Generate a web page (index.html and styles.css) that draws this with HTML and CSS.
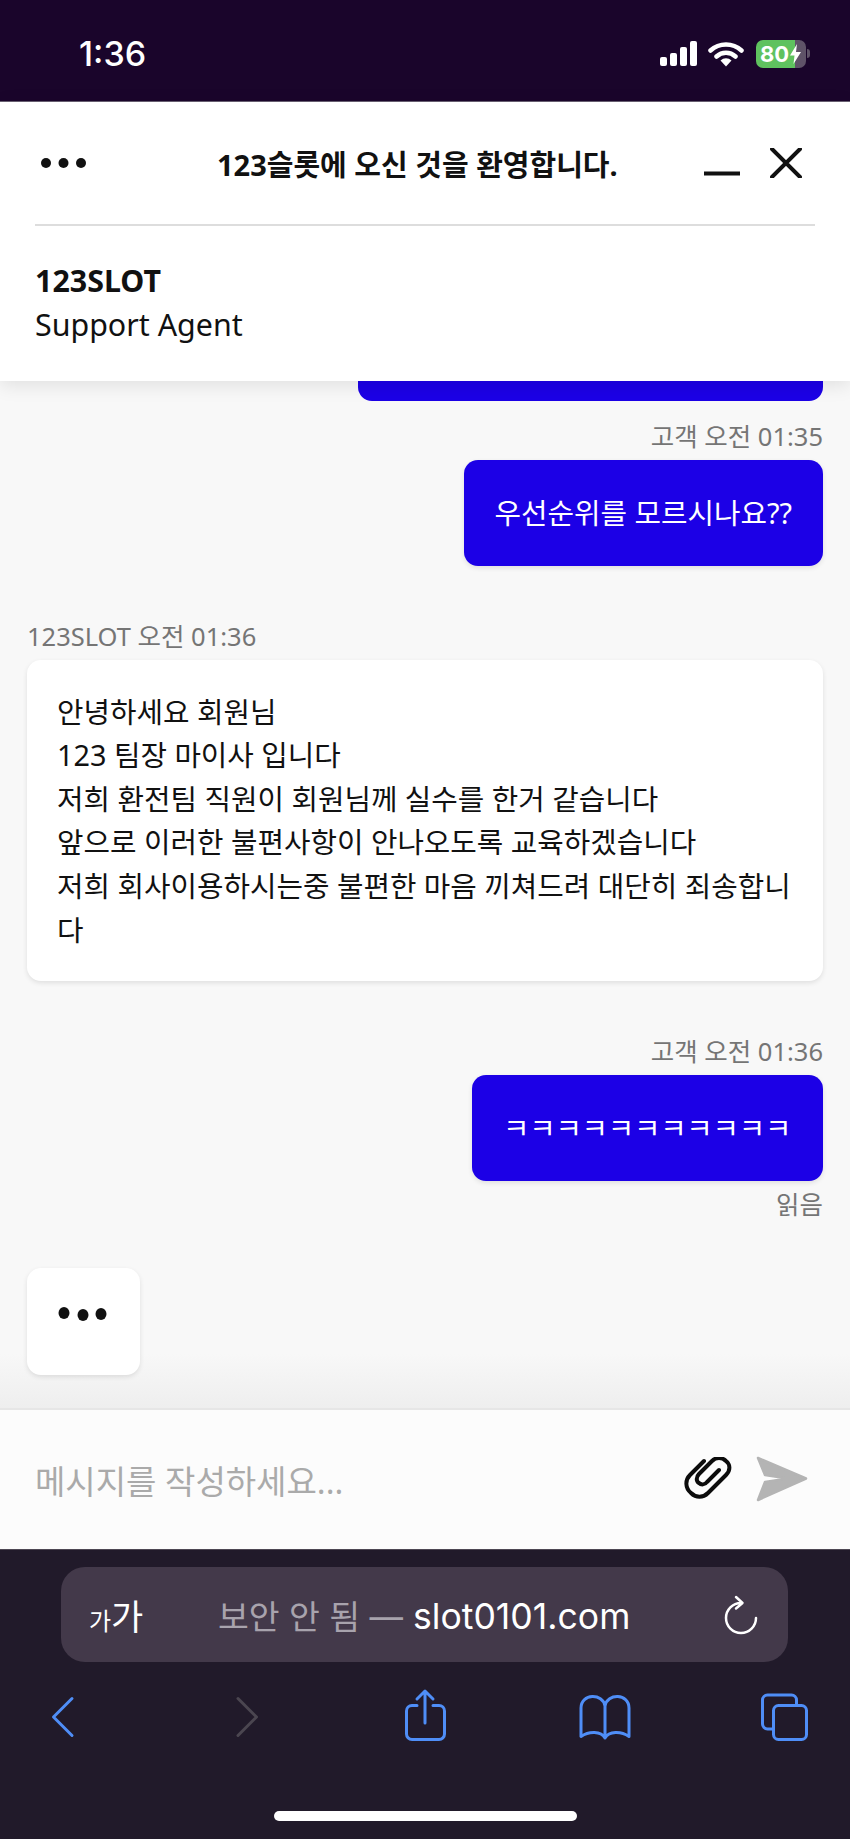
FILE: index.html
```html
<!DOCTYPE html>
<html lang="ko">
<head>
  <meta charset="UTF-8">
  <meta name="viewport" content="width=device-width, initial-scale=1.0">
  <title>123SLOT</title>
  <link rel="stylesheet" href="styles.css">
</head>
<body>
  <div class="status-bar">
    <span class="clock">1:36</span>
    <div class="status-icons">
      <div class="signal">
        <span class="bar bar-1"></span>
        <span class="bar bar-2"></span>
        <span class="bar bar-3"></span>
        <span class="bar bar-4"></span>
      </div>
      <svg class="wifi" width="36" height="27" viewBox="0 0 36 27">
        <path d="M2.5 10.5A23 23 0 0 1 33.5 10.5M8.5 16.5A14 14 0 0 1 27.5 16.5" fill="none" stroke="#fff" stroke-width="4.5" stroke-linecap="round"/>
        <path d="M12.5 20.5A8 8 0 0 1 23.500 20.500L18 26.500Z" fill="#fff"/>
      </svg>
      <div class="battery">
        <div class="battery-body">
          <span>80</span>
          <svg width="11" height="20" viewBox="0 0 11 20"><path d="M7 0L0 11.500H4.500L3.500 20L11 8H6Z" fill="#fff"/></svg>
        </div>
        <span class="battery-nub"></span>
      </div>
    </div>
  </div>

  <header class="chat-header">
    <div class="header-top">
      <svg class="header-dots" width="45" height="10" viewBox="0 0 45 10">
        <circle cx="5" cy="5" r="5"/><circle cx="22.500" cy="5" r="5"/><circle cx="40" cy="5" r="5"/>
      </svg>
      <h1 class="header-title">123슬롯에 오신 것을 환영합니다.</h1>
      <div class="window-controls">
        <svg width="36" height="30" viewBox="0 0 36 30"><path d="M0 25.500H36" stroke="#111" stroke-width="4"/></svg>
        <svg width="32" height="30" viewBox="0 0 32 30"><path d="M2 1L30 29M30 1L2 29" stroke="#111" stroke-width="4" stroke-linecap="round"/></svg>
      </div>
    </div>
    <div class="agent">
      <div class="agent-name">123SLOT</div>
      <div class="agent-role">Support Agent</div>
    </div>
  </header>

  <main class="chat">
    <div class="bubble-cut"></div>

    <div class="msg msg-user first">
      <div class="meta">고객 오전 01:35</div>
      <div class="bubble bubble-user">우선순위를 모르시나요??</div>
    </div>

    <div class="msg msg-agent">
      <div class="meta">123SLOT 오전 01:36</div>
      <div class="bubble bubble-agent">안녕하세요 회원님<br>123 팀장 마이사 입니다<br>저희 환전팀 직원이 회원님께 실수를 한거 같습니다<br>앞으로 이러한 불편사항이 안나오도록 교육하겠습니다<br>저희 회사이용하시는중 불편한 마음 끼쳐드려 대단히 죄송합니<br>다</div>
    </div>

    <div class="msg msg-user">
      <div class="meta">고객 오전 01:36</div>
      <div class="bubble bubble-user bubble-k">ㅋㅋㅋㅋㅋㅋㅋㅋㅋㅋㅋ</div>
      <div class="meta read">읽음</div>
    </div>

    <div class="typing">
      <svg width="50" height="20" viewBox="0 0 50 20">
        <ellipse cx="6" cy="8" rx="5.500" ry="6"/><ellipse cx="25" cy="10" rx="5.500" ry="6"/><ellipse cx="43" cy="9" rx="5.500" ry="6"/>
      </svg>
    </div>
  </main>

  <div class="composer">
    <span class="placeholder">메시지를 작성하세요...</span>
    <svg class="clip" width="48" height="43" viewBox="0 0 48 43">
      <path d="M20 4L6 18C1 23 1 31 7 36C12 41 19 41 24 36L42 18C47 13 46 7 42 4C38 0 32 0 28 4L15 17C12 20 12 24 15 26C17 28 21 28 23 25L35 13" fill="none" stroke="#0c0c0c" stroke-width="4" stroke-linecap="round"/>
    </svg>
    <svg class="send" width="54" height="48" viewBox="0 0 54 48">
      <path d="M3 3L51 23.500L3 45L10 27L33 23.500L10 20Z" fill="#b4b4b4" stroke="#b4b4b4" stroke-width="2.500" stroke-linejoin="round"/>
    </svg>
  </div>

  <div class="browser-bar">
    <div class="url-bar">
      <span class="text-size"><small>가</small>가</span>
      <span class="url"><span class="url-note">보안 안 됨 —</span> slot0101.com</span>
      <svg class="reload" width="36" height="44" viewBox="0 0 36 44">
        <path d="M18 10A15 15 0 1 0 33 25M13 4L19.500 10L13 15.500" fill="none" stroke="#fff" stroke-width="2.500" stroke-linecap="round" stroke-linejoin="round"/>
      </svg>
    </div>
    <nav class="browser-nav">
      <svg width="60" height="60" viewBox="0 0 60 60"><path d="M40 11.500L21.500 30L40 48.500" class="nav-stroke"/></svg>
      <svg width="60" height="60" viewBox="0 0 60 60"><path d="M21 11.500L39.500 30L21 48.500" class="nav-stroke nav-off"/></svg>
      <svg width="60" height="60" viewBox="0 0 60 60"><path d="M22 18.500H17A5.500 5.500 0 0 0 11.500 24V47A5.500 5.500 0 0 0 17 52.500H44A5.500 5.500 0 0 0 49.500 47V24A5.500 5.500 0 0 0 44 18.500H38M30 36V4.500M22 12L30 4L38 12" class="nav-stroke"/></svg>
      <svg width="60" height="60" viewBox="0 0 60 60"><path d="M30 51C26 44 14 44 6 49.500V21C6 6 28 6 30 19C32 6 54 6 54 21V49.500C46 44 34 44 30 51ZM30 19V51" class="nav-stroke"/></svg>
      <svg width="60" height="60" viewBox="0 0 60 60"><path d="M41.500 17V13A5 5 0 0 0 36.500 8H12.500A5 5 0 0 0 7.500 13V37A5 5 0 0 0 12.500 42H17" class="nav-stroke"/><rect x="18.500" y="18.500" width="33" height="34" rx="5" class="nav-stroke"/></svg>
    </nav>
    <div class="home-indicator"></div>
  </div>
</body>
</html>
```

FILE: styles.css
```css
* {
  box-sizing: border-box;
}
body {
  margin: 0;
  width: 850px;
  height: 1839px;
  display: flex;
  flex-direction: column;
  overflow: hidden;
  font-family: "Noto Sans", "Noto Sans CJK KR", sans-serif;
  color: #111;
  background-color: #f8f8f8;
}

/* phone status bar */
.status-bar {
  height: 102px;
  flex: none;
  display: flex;
  align-items: center;
  padding: 0 40px 0 79px;
  background-color: #1a052b;
  color: #fff;
  border-bottom: 1px solid #6b6274;
}
.clock {
  font-family: Inter, "Liberation Sans", sans-serif;
  font-size: 34px;
  font-weight: 500;
  margin-top: 6px;
}
.status-icons {
  margin-left: auto;
  display: flex;
  align-items: center;
  margin-top: 6px;
}
.signal {
  display: flex;
  align-items: flex-end;
  gap: 3px;
  height: 25px;
}
.bar {
  width: 7px;
  background-color: #fff;
  border-radius: 2px;
}
.bar-1 { height: 9px; }
.bar-2 { height: 13px; }
.bar-3 { height: 19px; }
.bar-4 { height: 25px; }
.wifi {
  margin-left: 11px;
}
.battery {
  margin-left: 12px;
  display: flex;
  align-items: center;
}
.battery-body {
  width: 50px;
  height: 28px;
  display: flex;
  align-items: center;
  padding-left: 4px;
  gap: 1px;
  border-radius: 7px;
  background: linear-gradient(90deg, #5fc25f 78%, #5f5368 78%);
  font-family: Inter, "Liberation Sans", sans-serif;
  font-size: 22px;
  font-weight: 700;
  color: #fff;
}
.battery-nub {
  width: 3px;
  height: 9px;
  margin-left: 1px;
  border-radius: 0 3px 3px 0;
  background-color: #5f5368;
}

/* chat header */
.chat-header {
  flex: none;
  height: 279px;
  background-color: #fff;
  box-shadow: 0 4px 18px rgba(0, 0, 0, 0.1);
  position: relative;
  z-index: 2;
}
.header-top {
  height: 124px;
  margin: 0 35px;
  display: flex;
  align-items: center;
  border-bottom: 2px solid #ddd;
  padding-left: 6px;
}
.header-dots {
  flex: none;
  fill: #111;
}
.header-title {
  margin: 0 0 0 131px;
  font-size: 29px;
  font-weight: 700;
  white-space: nowrap;
}
.window-controls {
  margin-left: auto;
  margin-right: 13px;
  display: flex;
  gap: 30px;
}
.agent {
  padding: 33px 35px 0;
}
.agent-name {
  font-size: 30.400px;
  font-weight: 700;
  line-height: 44px;
}
.agent-role {
  font-size: 30.400px;
  line-height: 44px;
}

/* messages */
.chat {
  flex: 1;
  min-height: 0;
  padding: 0 27px;
  overflow: hidden;
  position: relative;
}
.chat::after {
  content: "";
  position: absolute;
  left: 0;
  right: 0;
  bottom: 0;
  height: 54px;
  background: linear-gradient(rgba(238, 238, 238, 0), #eeeeee);
}
.bubble-cut {
  width: 465px;
  height: 20px;
  margin-left: auto;
  background-color: #1c00e6;
  border-radius: 0 0 14px 14px;
}
.msg {
  display: flex;
  flex-direction: column;
  margin-top: 53px;
}
.msg.first {
  margin-top: 18px;
}
.msg-user {
  align-items: flex-end;
}
.meta {
  font-size: 25.500px;
  line-height: 34px;
  color: #757575;
  margin-bottom: 7px;
}
.meta.read {
  margin: 6px 0 0;
}
.bubble {
  font-size: 28.800px;
  line-height: 43.600px;
  padding: 31px;
  border-radius: 14px;
  box-shadow: 0 2px 5px rgba(0, 0, 0, 0.1);
}
.bubble-user {
  color: #fff;
  background-color: #1c00e6;
}
.bubble-agent {
  padding: 30px;
  background-color: #fff;
}
.bubble-k {
  width: 351px;
  white-space: nowrap;
  letter-spacing: -0.300px;
}
.typing {
  width: 113px;
  height: 107px;
  margin-top: 47px;
  padding: 37px 0 0 31px;
  background-color: #fff;
  border-radius: 14px;
  box-shadow: 0 2px 5px rgba(0, 0, 0, 0.1);
  position: relative;
  z-index: 1;
}
.typing svg {
  display: block;
  fill: #111;
}

/* message input */
.composer {
  flex: none;
  height: 141px;
  display: flex;
  align-items: center;
  padding: 0 41px 0 35px;
  background-color: #fcfcfc;
  border-top: 2px solid #e6e6e6;
}
.placeholder {
  font-size: 33px;
  color: #aaa;
}
.clip {
  margin-left: auto;
  margin-top: -2px;
}
.send {
  margin-left: 23px;
  margin-top: -2px;
}

/* safari toolbar */
.browser-bar {
  flex: none;
  height: 290px;
  padding-top: 17px;
  background-color: #211a2a;
  border-top: 1px solid #4d4753;
}
.url-bar {
  width: 727px;
  height: 95px;
  margin-left: 61px;
  display: flex;
  align-items: center;
  padding: 0 29px 0 28px;
  border-radius: 24px;
  background-color: #43394a;
  color: #fff;
}
.text-size {
  font-size: 35px;
  width: 129px;
}
.text-size small {
  font-size: 24px;
}
.url {
  font-family: Inter, "Liberation Sans", sans-serif;
  font-size: 35.600px;
  white-space: nowrap;
}
.url-note {
  font-family: Inter, "Noto Sans CJK KR", sans-serif;
  font-size: 33.500px;
  color: #a8a3ad;
}
.reload {
  margin-left: auto;
}
.browser-nav {
  display: grid;
  grid-template-columns: 185px 178px 180px 180px 60px;
  margin-top: 25px;
  padding-left: 32px;
}
.nav-stroke {
  fill: none;
  stroke: #4f8ef7;
  stroke-width: 3;
  stroke-linecap: round;
  stroke-linejoin: round;
}
.nav-off {
  stroke: #4b4650;
}
.home-indicator {
  width: 303px;
  height: 10px;
  margin: 64px auto 0;
  border-radius: 5px;
  background-color: #fff;
}
```
